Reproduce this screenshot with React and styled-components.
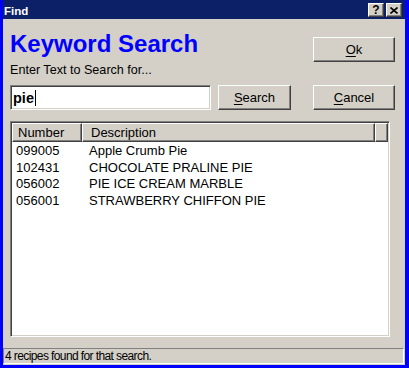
import React from "react";
import styled, { createGlobalStyle } from "styled-components";

const GlobalStyle = createGlobalStyle`
  html, body {
    margin: 0;
    padding: 0;
    background: #d4d0c8;
  }
  body {
    font-family: "Liberation Sans", Arial, sans-serif;
    color: #000;
  }
`;

const Window = styled.div`
  width: 409px;
  height: 368px;
  box-sizing: border-box;
  border-left: 3px solid #0000ff;
  border-right: 4px solid #0000ff;
  border-bottom: 3px solid #0000ff;
  background: #d4d0c8;
  display: flex;
  flex-direction: column;
  overflow: hidden;
`;

const TitleBar = styled.div`
  height: 19px;
  flex-shrink: 0;
  display: flex;
  align-items: flex-start;
  padding: 0 3px 0 1px;
  background: #0c2068;
`;

const TitleText = styled.span`
  flex: 1;
  margin-top: 5px;
  line-height: 12px;
  font-size: 11.5px;
  font-weight: bold;
  color: #fff;
`;

const CaptionButton = styled.div`
  width: 16px;
  height: 14px;
  margin-top: 3px;
  margin-left: ${(p) => (p.$gap ? "2px" : "0")};
  box-sizing: border-box;
  background: #d4d0c8;
  border: 1px solid;
  border-color: #fff #404040 #404040 #fff;
  box-shadow: inset -1px -1px #808080;
  display: flex;
  align-items: center;
  justify-content: center;
  font-size: 12px;
  font-weight: bold;
  line-height: 12px;
`;

const Client = styled.div`
  flex: 1;
  display: flex;
  flex-direction: column;
  padding: 0 10px 0 7px;
`;

const TopArea = styled.div`
  height: 91px;
  display: flex;
`;

const LeftCol = styled.div`
  width: 281px;
  display: flex;
  flex-direction: column;
`;

const Heading = styled.h1`
  margin: 11px 0 0;
  font-size: 24px;
  line-height: 28px;
  font-weight: bold;
  color: #0000ff;
`;

const Prompt = styled.div`
  margin-top: 5px;
  font-size: 12.6px;
  line-height: 15px;
`;

const SearchRow = styled.div`
  margin-top: 7px;
  display: flex;
  align-items: flex-start;
`;

const TextBox = styled.div`
  width: 201px;
  height: 25px;
  box-sizing: border-box;
  background: #fff;
  border: 1px solid;
  border-color: #808080 #fff #fff #808080;
  box-shadow: inset 1px 1px #404040, inset -1px -1px #d4d0c8;
  padding: 0 0 0 2px;
  display: flex;
  align-items: center;
  font-size: 14.5px;
  font-weight: bold;
`;

const Caret = styled.span`
  width: 1px;
  height: 16px;
  margin-left: 1px;
  background: #000;
`;

const Button = styled.div`
  width: ${(p) => p.$width}px;
  height: 25px;
  margin-left: ${(p) => p.$left || 0}px;
  box-sizing: border-box;
  background: #d4d0c8;
  border: 1px solid;
  border-color: #fff #404040 #404040 #fff;
  box-shadow: inset -1px -1px #808080;
  display: flex;
  align-items: center;
  justify-content: center;
  font-size: 13px;
  line-height: 15px;

  u {
    text-decoration-thickness: 1px;
    text-underline-offset: 2px;
  }
`;

const RightCol = styled.div`
  margin-left: 22px;
  padding-top: 18px;
  display: flex;
  flex-direction: column;
  justify-content: space-between;
`;

const ListView = styled.div`
  margin-top: 11px;
  width: 380px;
  height: 216px;
  box-sizing: border-box;
  background: #fff;
  border: 1px solid;
  border-color: #808080 #fff #fff #808080;
  box-shadow: inset 1px 1px #404040, inset -1px -1px #d4d0c8;
  padding: 1px;
  display: flex;
  flex-direction: column;
`;

const HeaderRow = styled.div`
  display: flex;
  height: 19px;
`;

const HeaderCell = styled.div`
  width: ${(p) => p.$width}px;
  flex-shrink: 0;
  box-sizing: border-box;
  background: #d4d0c8;
  border: 1px solid;
  border-color: #fff #404040 #404040 #fff;
  box-shadow: inset -1px -1px #808080;
  padding: 1px 0 0 ${(p) => p.$pad || 0}px;
  font-size: 13px;
  line-height: 15px;
  white-space: nowrap;
`;

const Rows = styled.div`
  padding-top: 1px;
`;

const Row = styled.div`
  display: grid;
  grid-template-columns: 73px 1fr;
  padding-left: 4px;
  height: 16.67px;
  font-size: 13px;
  line-height: 16.67px;
  white-space: nowrap;
`;

const StatusBar = styled.div`
  margin: 11px -9px 1px -7px;
  height: 16px;
  box-sizing: border-box;
  border: 1px solid;
  border-color: #808080 #fff #fff #808080;
  padding-left: 1px;
  font-size: 12px;
  letter-spacing: -0.6px;
  line-height: 14px;
  white-space: nowrap;
`;

const recipes = [
  { number: "099005", description: "Apple Crumb Pie" },
  { number: "102431", description: "CHOCOLATE PRALINE PIE" },
  { number: "056002", description: "PIE ICE CREAM MARBLE" },
  { number: "056001", description: "STRAWBERRY CHIFFON PIE" },
];

export default function App() {
  return (
    <>
      <GlobalStyle />
      <Window>
        <TitleBar>
          <TitleText>Find</TitleText>
          <CaptionButton>?</CaptionButton>
          <CaptionButton $gap>
            <svg width="8" height="7" viewBox="0 0 8 7">
              <path d="M0.5 0.5L7.5 6.5M7.5 0.5L0.5 6.5" stroke="#000" strokeWidth="1.6" />
            </svg>
          </CaptionButton>
        </TitleBar>
        <Client>
          <TopArea>
            <LeftCol>
              <Heading>Keyword Search</Heading>
              <Prompt>Enter Text to Search for...</Prompt>
              <SearchRow>
                <TextBox>
                  pie
                  <Caret />
                </TextBox>
                <Button $width={73} $left={7}>
                  <span>
                    <u>S</u>earch
                  </span>
                </Button>
              </SearchRow>
            </LeftCol>
            <RightCol>
              <Button $width={82}>
                <span>
                  <u>O</u>k
                </span>
              </Button>
              <Button $width={82}>
                <span>
                  <u>C</u>ancel
                </span>
              </Button>
            </RightCol>
          </TopArea>
          <ListView>
            <HeaderRow>
              <HeaderCell $width={70} $pad={5}>Number</HeaderCell>
              <HeaderCell $width={293} $pad={8}>Description</HeaderCell>
              <HeaderCell $width={13} />
            </HeaderRow>
            <Rows>
              {recipes.map((r) => (
                <Row key={r.number}>
                  <span>{r.number}</span>
                  <span>{r.description}</span>
                </Row>
              ))}
            </Rows>
          </ListView>
          <StatusBar>4 recipes found for that search.</StatusBar>
        </Client>
      </Window>
    </>
  );
}
